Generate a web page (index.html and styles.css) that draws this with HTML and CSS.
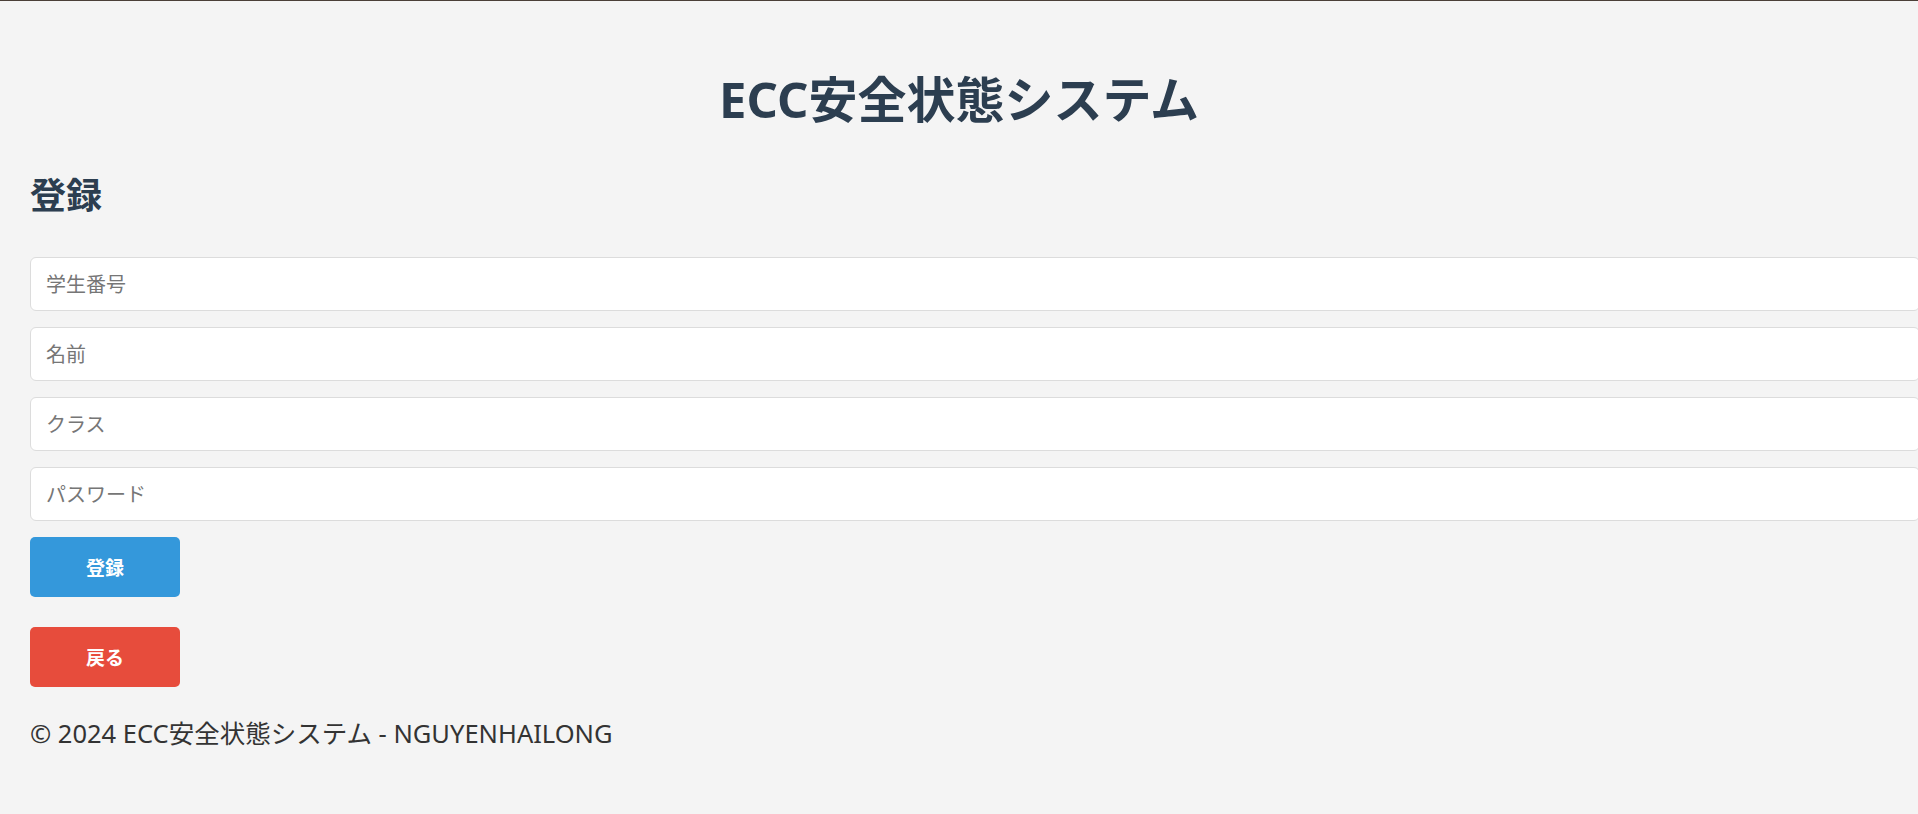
FILE: index.html
```html
<!DOCTYPE html>
<html lang="ja">
<head>
<meta charset="utf-8">
<title>ECC安全状態システム - 登録</title>
<link rel="stylesheet" href="styles.css">
</head>
<body>
<div class="page">
  <header class="top">
    <h1 class="title">ECC安全状態システム</h1>
  </header>
  <main class="content">
    <h2 class="heading">登録</h2>
    <form class="form">
      <input class="field" type="text" placeholder="学生番号">
      <input class="field" type="text" placeholder="名前">
      <input class="field" type="text" placeholder="クラス">
      <input class="field" type="password" placeholder="パスワード">
      <button class="btn btn-primary" type="button">登録</button>
    </form>
    <form class="back-form">
      <button class="btn btn-back" type="button">戻る</button>
    </form>
  </main>
  <footer class="footer">
    <p class="copy">© 2024 ECC安全状態システム - NGUYENHAILONG</p>
  </footer>
</div>
</body>
</html>
```

FILE: styles.css
```css
html, body {
  margin: 0;
  padding: 0;
}
body {
  background: #f4f4f4;
  border-top: 1px solid #4b3f38;
  overflow-x: hidden;
  font-family: "Noto Sans", "Noto Sans CJK JP", sans-serif;
  color: #333;
}
.page {
  padding: 0 30px;
}
.title {
  margin: 67px 0 0;
  font-size: 49px;
  line-height: 62px;
  font-weight: 700;
  color: #2c3e50;
  text-align: center;
}
.content {
  display: block;
}
.heading {
  margin: 44px 0 0;
  font-size: 36px;
  line-height: 44px;
  font-weight: 700;
  color: #2c3e50;
}
.form {
  margin-top: 39px;
  display: flex;
  flex-direction: column;
  align-items: flex-start;
}
.field {
  display: block;
  width: 100%;
  height: 24px;
  padding: 14px 15px;
  margin: 0 0 16px;
  border: 1px solid #dcdcdc;
  border-radius: 6px;
  background: #fff;
  font-family: "Noto Sans", "Noto Sans CJK JP", sans-serif;
  font-size: 20px;
  color: #333;
  outline: none;
}
.field::placeholder {
  color: #767676;
}
.btn {
  width: 150px;
  height: 60px;
  border: none;
  border-radius: 5px;
  color: #fff;
  font-family: "Noto Sans", "Noto Sans CJK JP", sans-serif;
  font-size: 19px;
  font-weight: 700;
  cursor: pointer;
  padding: 0;
}
.btn-primary {
  background: #3498db;
}
.back-form {
  margin-top: 30px;
}
.btn-back {
  background: #e74c3c;
}
.footer {
  margin-top: 31px;
}
.copy {
  margin: 0;
  font-size: 25.5px;
  line-height: 30px;
  color: #333;
}
```
